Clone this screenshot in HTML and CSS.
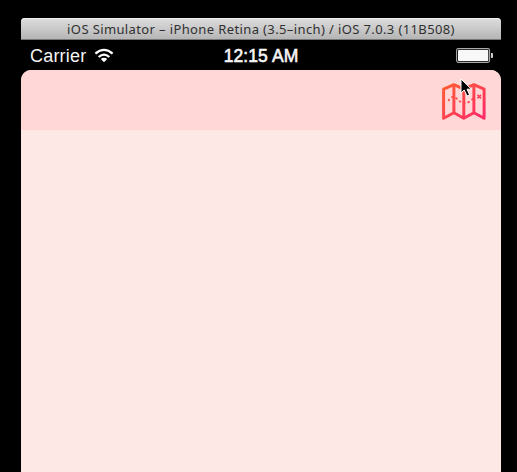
FILE: index.html
```html
<!DOCTYPE html>
<html lang="en">
<head>
<meta charset="utf-8">
<title>iOS Simulator</title>
<link rel="stylesheet" href="styles.css">
</head>
<body>
<main class="window">
  <header class="titlebar"><span class="title">iOS Simulator – iPhone Retina (3.5–inch) / iOS 7.0.3 (11B508)</span></header>
  <div class="status">
    <div class="network">
      <span class="carrier">Carrier</span>
      <svg class="wifi" width="20" height="16" viewBox="0 0 20 16">
        <g fill="none" stroke="#fff" stroke-width="2.3">
          <path d="M1.4 5.7Q10-1.9 18.6 5.7"/>
          <path d="M4.7 9Q10 4.3 15.3 9"/>
        </g>
        <path d="M6.8 11.1Q10 8.4 13.2 11.1L10 14.3Z" fill="#fff"/>
      </svg>
    </div>
    <span class="time">12:15 AM</span>
    <svg class="battery" width="38" height="16" viewBox="0 0 38 16">
      <rect x=".6" y=".6" width="33" height="13.8" rx="1.8" fill="#000" stroke="#aaa" stroke-width="1.1"/>
      <rect x="2" y="2" width="30.3" height="11" rx=".8" fill="#f8f8f8"/>
      <path d="M35 5h1q1 0 1 1v3q0 1-1 1h-1z" fill="#ccc"/>
    </svg>
  </div>
  <section class="screen">
    <nav class="navbar">
      <svg class="map" width="46" height="40" viewBox="-.6 0 46 40">
        <defs>
          <linearGradient id="warm" gradientUnits="userSpaceOnUse" x1="8" y1="2" x2="38" y2="38">
            <stop offset="0" stop-color="#ff5b37"/><stop offset="1" stop-color="#ff2c68"/>
          </linearGradient>
        </defs>
        <g fill="none" stroke="url(#warm)" stroke-width="3" stroke-linejoin="round">
          <path d="M3 7.2 13.3 2.7 23.2 7.2 33.3 2.7 43.5 7.2V36.2L33.3 30.7 23.2 36.2 13.3 30.7 3 36.2Z"/>
          <path d="M13.3 3V31M23.2 7V36M33.3 3V31"/>
          <path d="M7.8 19Q11 12.3 16 16.5Q23 24 29 19.5L34 15.5" stroke-width="1.8" stroke-dasharray="2.2 2.4"/>
          <path d="M36.8 12.8l3.6 3.6m0-3.6L36.8 16.4" stroke-width="1.6"/>
        </g>
      </svg>
      <svg class="cursor" width="13" height="19" viewBox="0 0 13 19">
        <path d="M1 1V15L4.2 12 7 18 9.6 16.8 7 11.2H11.4Z" fill="#000" stroke="#fff" stroke-width="1"/>
      </svg>
    </nav>
  </section>
</main>
</body>
</html>
```
FILE: styles.css
```css
* { box-sizing: border-box; }
body { margin: 0; height: 472px; padding: 18px 16px 0 21px; background: #000; overflow: hidden; }
.window { height: 454px; display: flex; flex-direction: column; }
.titlebar {
  height: 22px; display: flex; justify-content: center; align-items: center;
  border-radius: 4px 4px 0 0; box-shadow: inset 0 1px #f0f0f0, inset 0 -1px #777;
  background: linear-gradient(#dedede, #b3b3b3);
}
.title { font: 13px/22px "Noto Sans", sans-serif; color: #303030; white-space: nowrap; letter-spacing: .38px; }
.status {
  height: 30px; display: grid; grid-template-columns: 1fr auto 1fr; align-items: center;
  padding: 0 7px 0 9px; color: #f5f5f5; font: 18px/30px "Liberation Sans", sans-serif;
}
.network { display: flex; align-items: center; gap: 8px; }
.carrier { letter-spacing: .2px; }
.time { font-size: 17.5px; letter-spacing: .1px; padding-top: 1px; margin-right: 2px; -webkit-text-stroke: .6px #f5f5f5; }
.battery { justify-self: end; }
.screen { flex: 1; border-radius: 10px 10px 0 0; overflow: hidden; background: #fde8e5; }
.navbar {
  position: relative; height: 60px; display: flex; justify-content: flex-end; align-items: flex-start;
  padding: 12px 15px 0 0; background: #ffd7d6;
}
.cursor { position: absolute; left: 439px; top: 8px; }
```
